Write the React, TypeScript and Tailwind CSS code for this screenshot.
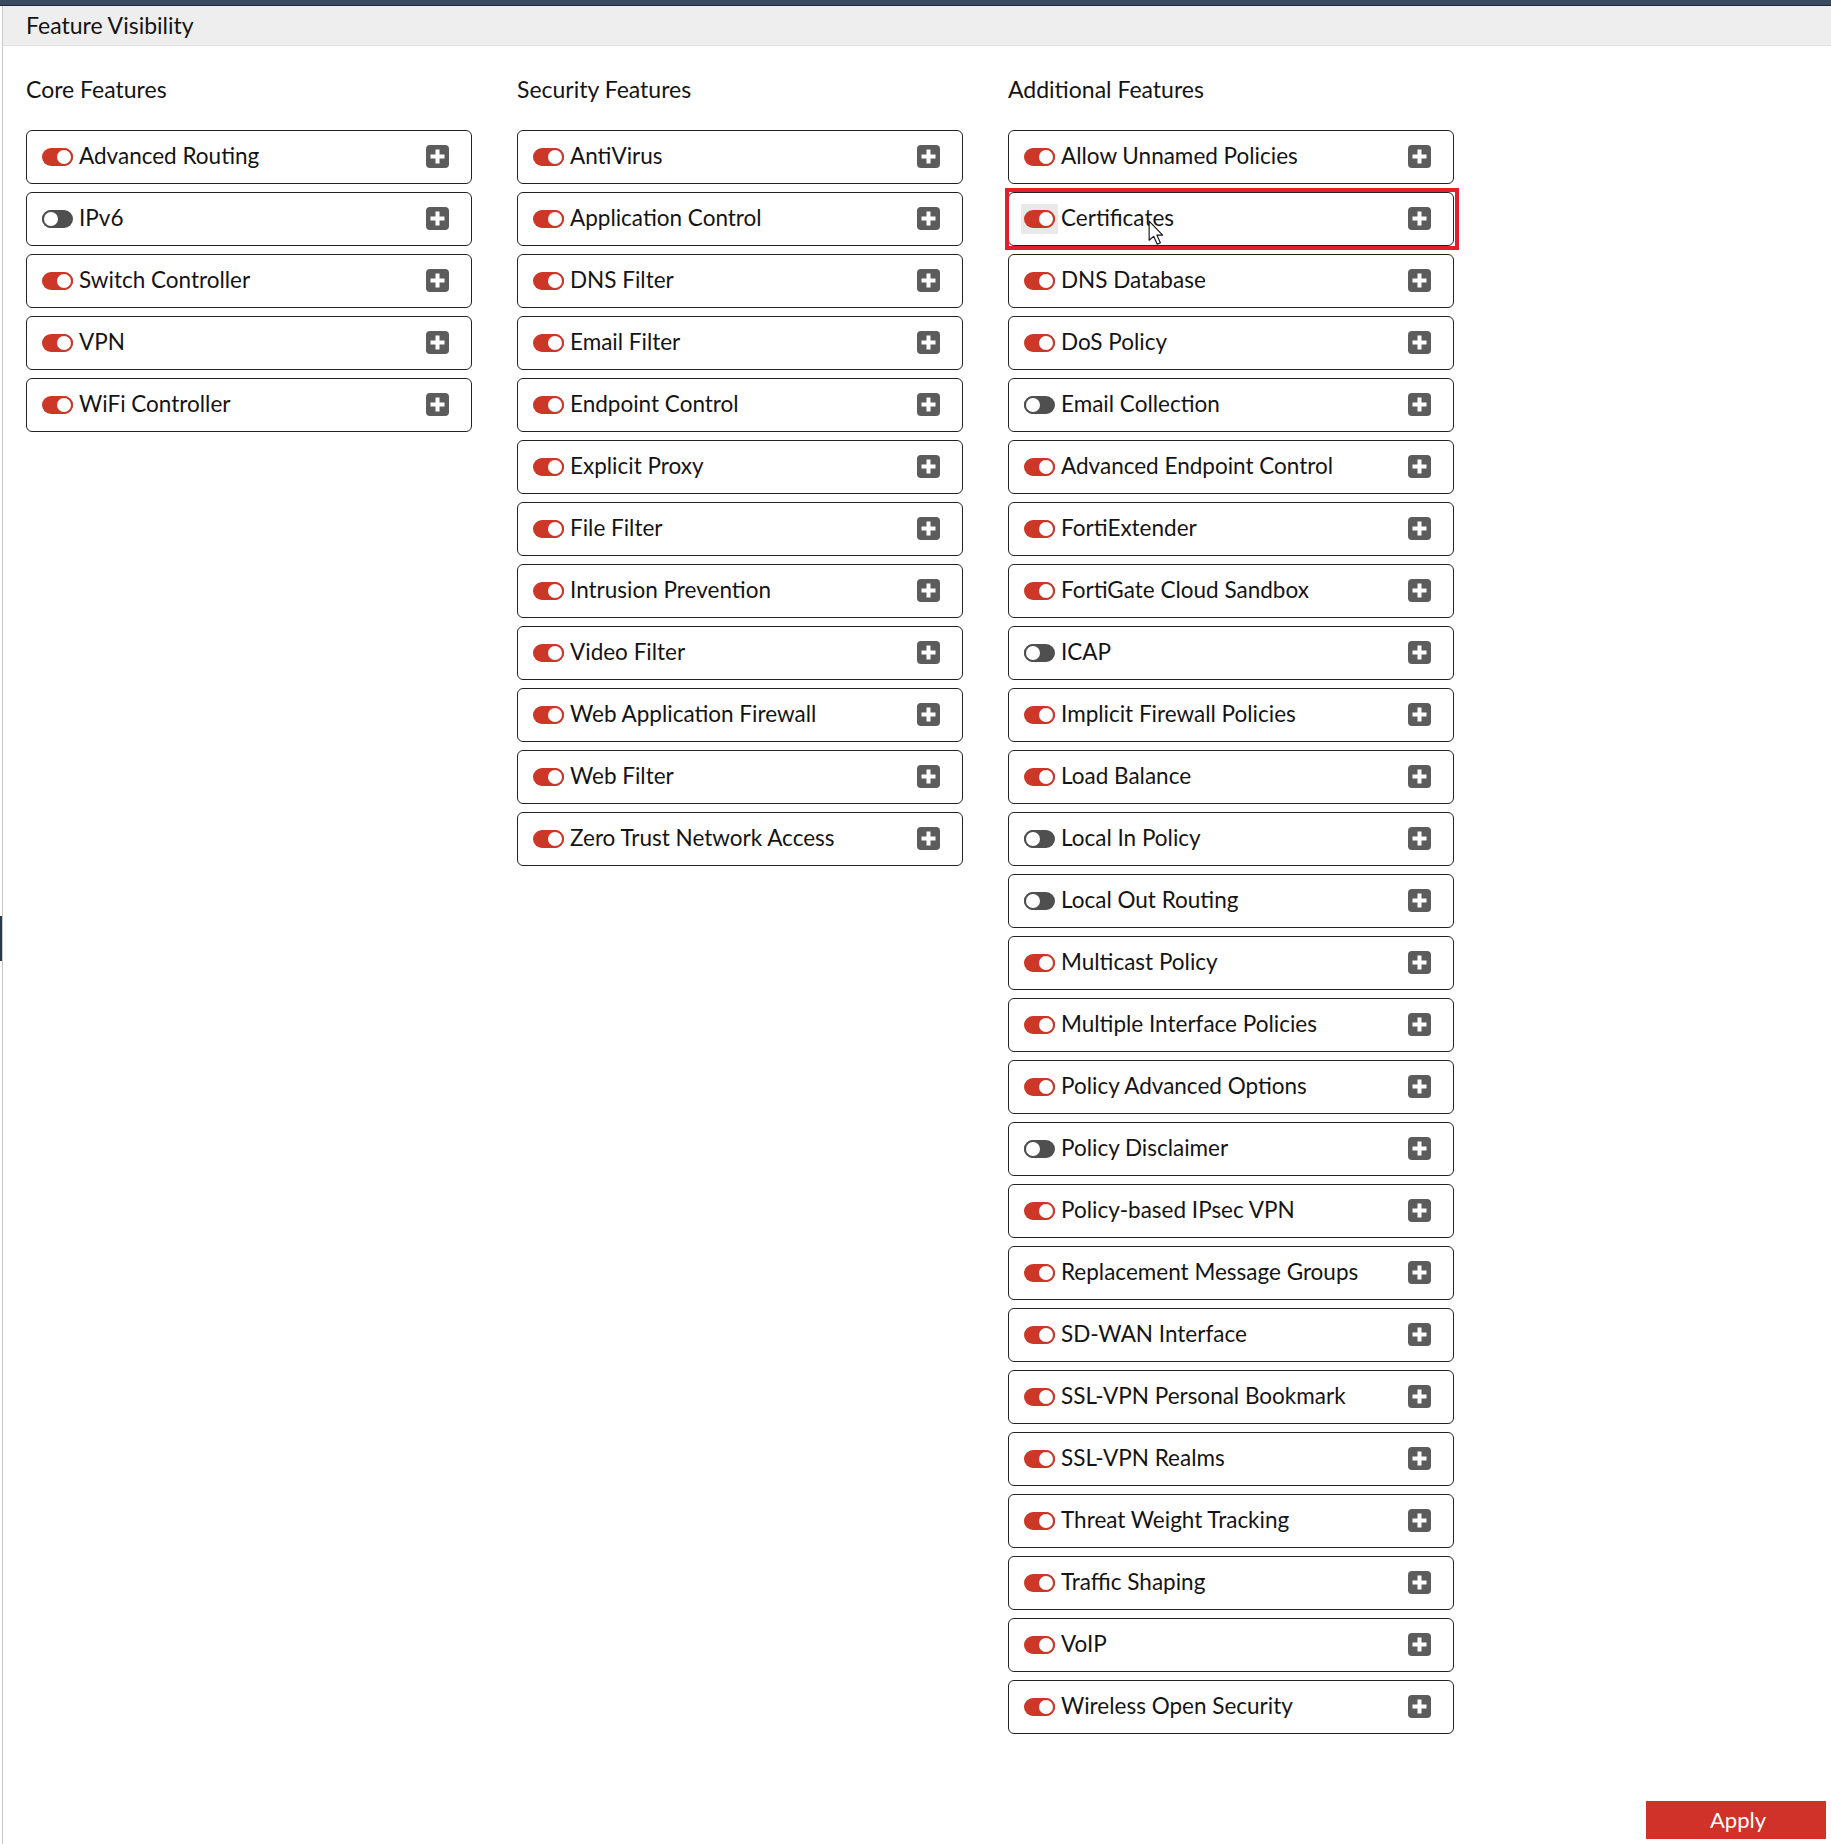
import { useState } from 'react';

type Feature = { name: string; on: boolean };

const core: Feature[] = [
  { name: 'Advanced Routing', on: true },
  { name: 'IPv6', on: false },
  { name: 'Switch Controller', on: true },
  { name: 'VPN', on: true },
  { name: 'WiFi Controller', on: true },
];

const security: Feature[] = [
  'AntiVirus',
  'Application Control',
  'DNS Filter',
  'Email Filter',
  'Endpoint Control',
  'Explicit Proxy',
  'File Filter',
  'Intrusion Prevention',
  'Video Filter',
  'Web Application Firewall',
  'Web Filter',
  'Zero Trust Network Access',
].map((name) => ({ name, on: true }));

const additional: Feature[] = [
  { name: 'Allow Unnamed Policies', on: true },
  { name: 'Certificates', on: true },
  { name: 'DNS Database', on: true },
  { name: 'DoS Policy', on: true },
  { name: 'Email Collection', on: false },
  { name: 'Advanced Endpoint Control', on: true },
  { name: 'FortiExtender', on: true },
  { name: 'FortiGate Cloud Sandbox', on: true },
  { name: 'ICAP', on: false },
  { name: 'Implicit Firewall Policies', on: true },
  { name: 'Load Balance', on: true },
  { name: 'Local In Policy', on: false },
  { name: 'Local Out Routing', on: false },
  { name: 'Multicast Policy', on: true },
  { name: 'Multiple Interface Policies', on: true },
  { name: 'Policy Advanced Options', on: true },
  { name: 'Policy Disclaimer', on: false },
  { name: 'Policy-based IPsec VPN', on: true },
  { name: 'Replacement Message Groups', on: true },
  { name: 'SD-WAN Interface', on: true },
  { name: 'SSL-VPN Personal Bookmark', on: true },
  { name: 'SSL-VPN Realms', on: true },
  { name: 'Threat Weight Tracking', on: true },
  { name: 'Traffic Shaping', on: true },
  { name: 'VoIP', on: true },
  { name: 'Wireless Open Security', on: true },
];

function Toggle({ on }: { on: boolean }) {
  return (
    <span
      className={`relative flex h-[18px] w-[31px] items-center rounded-full ${
        on ? 'justify-end bg-[#cc3728]' : 'justify-start bg-[#4f4f4f]'
      }`}
    >
      <span
        className={`h-[18px] w-[18px] rounded-full border-[2px] bg-white ${
          on ? 'border-[#cc3728]' : 'border-[#4f4f4f]'
        }`}
      />
    </span>
  );
}

function PlusSquare() {
  return (
    <svg width="23" height="23" viewBox="0 0 23 23">
      <rect x="0" y="0" width="23" height="23" rx="4" fill="#5c5c5c" />
      <rect x="4.5" y="9.5" width="14" height="4" fill="#fff" />
      <rect x="9.5" y="4.5" width="4" height="14" fill="#fff" />
    </svg>
  );
}

function Cursor() {
  return (
    <svg width="18" height="27" viewBox="0 0 16 24" className="pointer-events-none">
      <path
        d="M1 1 L1 18 L5 14.5 L8.2 21.5 L11 20.3 L7.9 13.4 L13 13.4 Z"
        fill="#fff"
        stroke="#111"
        strokeWidth="1"
        strokeLinejoin="round"
      />
    </svg>
  );
}

function FeatureRow({ feature, highlighted }: { feature: Feature; highlighted?: boolean }) {
  return (
    <div className="relative flex h-[54px] items-center rounded-[6px] border border-[#222] bg-white pl-[12px] pr-[22px]">
      <span className={`px-[3px] py-[6px] ${highlighted ? 'bg-[#e9e9e9]' : ''}`}>
        <Toggle on={feature.on} />
      </span>
      <span className="ml-[3px] flex-1 text-[22.5px] leading-none text-[#141414]">{feature.name}</span>
      <PlusSquare />
      {highlighted && (
        <>
          <span className="pointer-events-none absolute -bottom-[5px] -left-[4px] -right-[6px] -top-[5px] border-[4px] border-[#e2202b]" />
          <span className="absolute left-[139px] top-[27px]">
            <Cursor />
          </span>
        </>
      )}
    </div>
  );
}

function Section({ title, items, highlight }: { title: string; items: Feature[]; highlight?: string }) {
  return (
    <div className="flex w-[446px] flex-col">
      <h3 className="mb-[26px] text-[23px] leading-[1.2] text-[#141414]">{title}</h3>
      <div className="flex flex-col gap-[8px]">
        {items.map((f) => (
          <FeatureRow key={f.name} feature={f} highlighted={f.name === highlight} />
        ))}
      </div>
    </div>
  );
}

export default function App() {
  const [highlight] = useState('Certificates');

  return (
    <div className="flex h-[1844px] w-full flex-col bg-white font-['Lato','Liberation_Sans',sans-serif]">
      <div className="h-[6px] border-b border-[#1f2836] bg-[#3b4a63]" />
      <div className="flex flex-1">
        {/* thin left rail */}
        <div className="w-[2px] shrink-0">
          <div className="mt-[910px] h-[45px] bg-[#2a3850]" />
        </div>
        <div className="flex flex-1 flex-col border-l border-[#c9c9c9]">
          <div className="flex h-[40px] items-center border-b border-[#e2e2e2] bg-[#eeeeee] pl-[23px]">
            <span className="text-[23px] leading-[1.2] text-[#141414]">Feature Visibility</span>
          </div>
          <div className="flex gap-[45px] pl-[23px] pt-[30px]">
            <Section title="Core Features" items={core} />
            <Section title="Security Features" items={security} />
            <Section title="Additional Features" items={additional} highlight={highlight} />
          </div>
          <div className="mt-auto flex justify-end pb-[5px] pr-[5px]">
            <button className="h-[38px] w-[180px] bg-[#d0322a] pl-[4px] text-[22px] leading-none text-white">
              Apply
            </button>
          </div>
        </div>
      </div>
    </div>
  );
}
